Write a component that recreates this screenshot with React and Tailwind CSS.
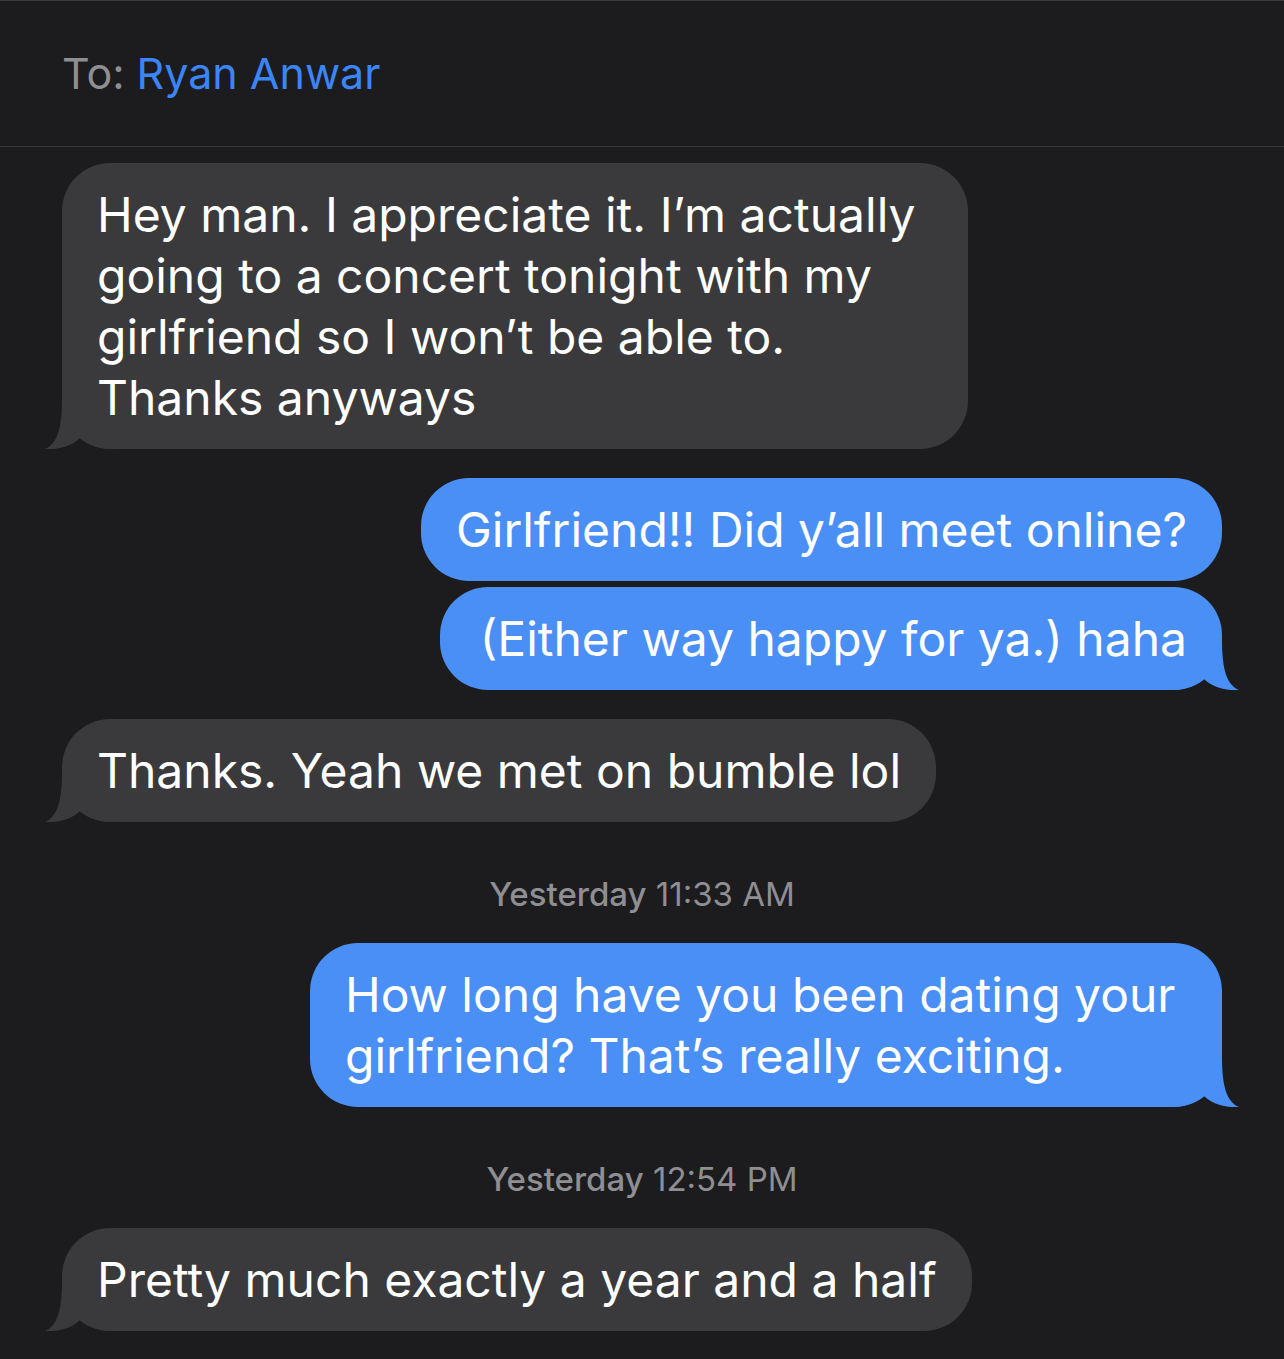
const Tail = ({ side, color }) => {
  // little iMessage hook at the bottom corner of the last bubble in a group
  const pos = side === "right" ? "-right-[17px] -scale-x-100" : "-left-[17px]";
  return (
    <svg
      className={`absolute bottom-0 ${pos}`}
      width="70"
      height="50"
      viewBox="0 0 70 50"
    >
      <path
        d="M17 0 C17 30 12 45 0 50 C14 51 27 47 35 39 C44 47 55 50 70 50 L70 0 Z"
        fill={color}
      />
    </svg>
  );
};

const Bubble = ({ me, tail, className = "", children }) => {
  const color = me ? "#4a8ff5" : "#3a3a3c";
  return (
    <div
      className={`relative rounded-[48px] px-[35px] py-[21px] text-[48px] leading-[61px] text-white ${
        me ? "self-end bg-[#4a8ff5]" : "self-start bg-[#3a3a3c]"
      } ${className}`}
    >
      <span className="relative z-10">{children}</span>
      {tail && <Tail side={me ? "right" : "left"} color={color} />}
    </div>
  );
};

const Stamp = ({ day, time, className = "" }) => (
  <div className={`text-center text-[33px] leading-[40px] text-[#8e8e93] ${className}`}>
    <span className="font-medium">{day}</span> {time}
  </div>
);

export default function App() {
  return (
    <div
      className="min-h-screen w-full bg-[#1c1c1e] border-t border-[#3a3a3c]"
      style={{ fontFamily: "Inter, 'Noto Sans', sans-serif" }}
    >
      {/* header */}
      <div className="h-[146px] border-b border-[#38383a] px-[62px] flex items-center text-[43px]">
        <span className="text-[#8e8e93]">To:</span>
        <span className="ml-3 text-[#3b86f7]">Ryan Anwar</span>
      </div>

      {/* thread */}
      <div className="flex flex-col px-[62px] pt-[16px] pb-6">
        <Bubble tail className="w-[906px]">
          Hey man. I appreciate it. I’m actually
          <br />
          going to a concert tonight with my
          <br />
          girlfriend so I won’t be able to.
          <br />
          Thanks anyways
        </Bubble>

        <Bubble me className="mt-[29px]">
          Girlfriend!! Did y’all meet online?
        </Bubble>
        <Bubble me tail className="mt-[6px] pl-[40px]">
          (Either way happy for ya.) haha
        </Bubble>

        <Bubble tail className="mt-[29px]">
          Thanks. Yeah we met on bumble lol
        </Bubble>

        <Stamp day="Yesterday" time="11:33 AM" className="mt-[52px]" />

        <Bubble me tail className="mt-[29px] w-[912px]">
          How long have you been dating your
          <br />
          girlfriend? That’s really exciting.
        </Bubble>

        <Stamp day="Yesterday" time="12:54 PM" className="mt-[52px]" />

        <Bubble tail className="mt-[29px]">
          Pretty much exactly a year and a half
        </Bubble>
      </div>
    </div>
  );
}
